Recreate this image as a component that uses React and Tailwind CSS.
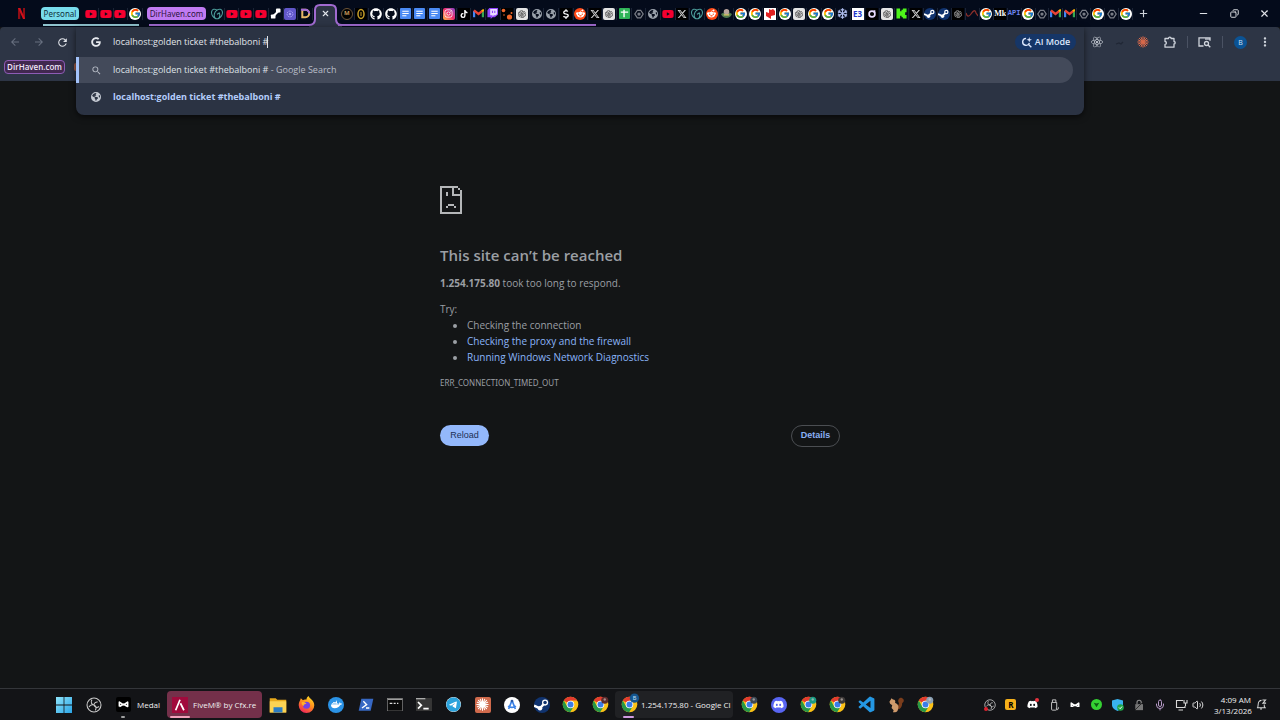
import React, { useState } from 'react';
import clsx from 'clsx';
import { FcGoogle } from 'react-icons/fc';
import {
  FaGithub, FaInstagram, FaTiktok, FaRedditAlien,
  FaXTwitter, FaDiscord, FaDocker, FaTelegram, FaReact, FaYoutube, FaGoogle,
  FaDollarSign, FaEarthAmericas, FaRegSnowflake,
} from 'react-icons/fa6';
import { AiOutlineOpenAI } from 'react-icons/ai';
import { BiLogoVisualStudio } from 'react-icons/bi';
import { MdSearch, MdRefresh, MdMoreVert, MdArrowBack, MdArrowForward } from 'react-icons/md';
import { SiGodaddy } from 'react-icons/si';
import { Plus, Minus, X, Copy, Mic, Volume2 } from 'lucide-react';

const QUERY = 'localhost:golden ticket #thebalboni #';

const Tile = ({ className, children }) => (
  <span className={clsx('flex size-3 shrink-0 items-center justify-center overflow-hidden', className)}>{children}</span>
);

const GmailIcon = () => (
  <svg viewBox="0 0 12 10" className="w-[11px]">
    <path d="M1.2 9V2" stroke="#4285f4" strokeWidth="2.400" />
    <path d="M10.8 9V2" stroke="#34a853" strokeWidth="2.400" />
    <path d="M1 1.500l5 4 5-4" fill="none" stroke="#ea4335" strokeWidth="2.600" />
    <path d="M9.800 2.500l2-1.800" stroke="#fbbc04" strokeWidth="2" />
  </svg>
);

const HexIcon = () => (
  <svg viewBox="0 0 12 12" className="size-[10px]" fill="none" stroke="#7b7f88" strokeWidth="1.500">
    <path d="M4 1.500h4L11 6l-3 4.500H4L1 6z" />
    <circle cx="6" cy="6" r="1.200" fill="#7b7f88" />
  </svg>
);

const StarBurst = ({ className, color }) => (
  <svg viewBox="0 0 24 24" className={className} stroke={color} strokeWidth="2" strokeLinecap="round">
    <path d="M12 12V1.500M12 12V22.500M12 12H1.500M12 12H22.500M12 12L4.500 4.500M12 12l7.500-7.500M12 12l-7.500 7.500M12 12l7.500 7.500M12 12L8 2.500M12 12l4-9.500M12 12l-4 9.500M12 12l4 9.500M12 12L2.500 8M12 12l9.500-4M12 12l-9.500 4M12 12l9.500 4" />
  </svg>
);

const MedalIcon = ({ className }) => (
  <svg viewBox="0 0 24 14" className={className} fill="none" stroke="#fff" strokeWidth="3.600" strokeLinejoin="round">
    <path d="M3 12V2.500l9 6 9-6V12l-9-5-9 5" />
  </svg>
);

const ObsIcon = ({ className }) => (
  <svg viewBox="0 0 24 24" className={className} fill="none" stroke="#c9c9c9" strokeWidth="1.600">
    <circle cx="12" cy="12" r="10.500" />
    <path d="M9 4c-3 4 0 8 3 8 0-3 3-5 5.500-4.500M12 12c3 1 4 5 2 8M19.500 14c-3 3-7 1-7.500-2M12 12c-3-1-6 0-7.500 3" />
  </svg>
);

// favicons, keyed by site
const icons = {
  yt: <Tile><FaYoutube className="size-3 text-[#f5002f]" /></Tile>,
  google: <Tile className="rounded-full bg-white"><FcGoogle className="size-[11px]" /></Tile>,
  godaddy: <SiGodaddy className="size-3 text-[#4fa3a0]" />,
  link: (
    <svg viewBox="0 0 12 12" className="size-[11px]" fill="#fff">
      <rect x="6.500" y="0.500" width="5" height="4.500" rx="1" />
      <rect x="1" y="7" width="5" height="4.500" rx="1" />
      <path d="M3 8l5-5 1.500 1.500-5 5z" />
    </svg>
  ),
  violet: (
    <Tile className="rounded-xs bg-[#6157c9]">
      <svg viewBox="0 0 12 12" className="size-[10px]" fill="none" stroke="#b8b2ff"><circle cx="6" cy="6" r="3.500" strokeDasharray="2 1" /><circle cx="6" cy="6" r="1" fill="#b8b2ff" /></svg>
    </Tile>
  ),
  d: (
    <svg viewBox="0 0 12 12" className="size-[11px]" fill="none" strokeWidth="2.200">
      <path d="M2.500 2v8H6a4 4 0 0 0 0-8z" stroke="#e8b866" />
      <path d="M1 2h5a4 4 0 0 1 4 4" stroke="#a26bd8" />
    </svg>
  ),
  medalM: <Tile className="rounded-full border border-[#6d5538] bg-black text-[6px] font-bold text-[#c99a5e]">M</Tile>,
  coin: (
    <Tile className="bg-black">
      <svg viewBox="0 0 12 12" className="size-3" fill="none" stroke="#c7a02a"><ellipse cx="6" cy="6" rx="3" ry="4.500" strokeWidth="1.500" /><path d="M6 4v4" /></svg>
    </Tile>
  ),
  github: <FaGithub className="size-3 text-white" />,
  doc: (
    <svg viewBox="0 0 12 12" className="size-[11px]">
      <rect width="12" height="12" rx="1" fill="#4a8af4" />
      <path d="M2.500 3.500h7M2.500 6h7M2.500 8.500h4.500" stroke="#fff" strokeWidth="1.200" />
    </svg>
  ),
  ig: <Tile className="rounded-xs bg-linear-to-tr from-[#ffb338] via-[#f0286a] to-[#8a3ac8] text-white"><FaInstagram className="size-[9px]" /></Tile>,
  tiktok: <Tile className="bg-black text-white"><FaTiktok className="size-2" /></Tile>,
  gmail: <GmailIcon />,
  twitch: (
    <svg viewBox="0 0 12 12" className="size-[11px]">
      <path d="M2.500 0H12v7L8.500 10H6l-2 2v-2H0.500V2.500z" fill="#9146ff" />
      <path d="M3.500 1H11v5.500L9.500 8h-2L6 9.500V8H3.500z" fill="#e9dcff" />
      <path d="M6 3v2.500M8.500 3v2.500" stroke="#9146ff" strokeWidth="1.200" />
    </svg>
  ),
  dots: (
    <Tile className="bg-black">
      <svg viewBox="0 0 12 12" className="size-3" fill="#f0662a"><circle cx="2.500" cy="2.500" r="1.800" /><circle cx="8.500" cy="9" r="2.600" /><circle cx="10.500" cy="5" r="1" /><circle cx="3" cy="7" r="0.800" /></svg>
    </Tile>
  ),
  gpt: <Tile className="rounded-xs bg-[#e4e4e4] text-[#3a3a3a]"><AiOutlineOpenAI className="size-[10px]" /></Tile>,
  globe: <FaEarthAmericas className="size-[10px] text-[#98a0aa]" />,
  dollar: <Tile className="bg-black text-white"><FaDollarSign className="size-[10px]" /></Tile>,
  reddit: <Tile className="rounded-full bg-[#ff4a17] text-white"><FaRedditAlien className="size-[9px]" /></Tile>,
  x: <Tile className="bg-black text-[#d8d8d8]"><FaXTwitter className="size-[10px]" /></Tile>,
  sheet: (
    <svg viewBox="0 0 12 12" className="size-[11px]">
      <rect width="12" height="12" rx="1" fill="#2fb457" />
      <path d="M2 4.500h8M5.500 2v8" stroke="#fff" strokeWidth="1.500" />
    </svg>
  ),
  hex: <HexIcon />,
  lily: (
    <svg viewBox="0 0 12 12" className="size-[11px]">
      <path d="M0 6.500c2 6 10 6 12 0L9 5H3z" fill="#4f7a4d" /><circle cx="6" cy="4" r="3" fill="#b9a59c" /><path d="M3 7.500h6" stroke="#d8c46a" strokeWidth="1.500" />
    </svg>
  ),
  red: (
    <Tile className="bg-white">
      <svg viewBox="0 0 12 12" className="size-3" fill="#e02020"><path d="M2 4l3 1V1l2 1 2-1 2 2v4L7 8v3L2 8z" /></svg>
    </Tile>
  ),
  snow: <FaRegSnowflake className="size-[11px] text-[#a9b8e8]" />,
  e3: <Tile className="bg-white text-[8px] font-bold text-[#2336c9]">E3</Tile>,
  ring: (
    <Tile className="bg-black">
      <svg viewBox="0 0 12 12" className="size-[10px]" fill="none" stroke="#e8dcff" strokeWidth="2"><circle cx="6" cy="6" r="3.500" /><path d="M9 1.500v3" /></svg>
    </Tile>
  ),
  kick: (
    <svg viewBox="0 0 12 12" className="size-[11px]" fill="#4df51a">
      <path d="M0.500 0.500h4v3h1.500V2h1.500V0.500h4v4H10v1.500H9v0h1v1.500h1.500v4h-4V10H6V8.500H4.500v3h-4z" />
    </svg>
  ),
  steam: (
    <svg viewBox="0 0 12 12" className="size-3">
      <circle cx="6" cy="6" r="6" fill="#10336f" />
      <path d="M0 6l4.500 2L8 4.500" fill="none" stroke="#fff" strokeWidth="1.800" />
      <circle cx="8.300" cy="4" r="2.200" fill="#fff" /><circle cx="4.500" cy="8.300" r="1.700" fill="#fff" /><circle cx="8.300" cy="4" r="1" fill="#10336f" />
    </svg>
  ),
  atom: <Tile className="bg-black text-[#b5b5b5]"><AiOutlineOpenAI className="size-[10px]" /></Tile>,
  wave: (
    <svg viewBox="0 0 12 12" className="size-3" fill="none" stroke="#8a2f2a" strokeWidth="1.300"><path d="M0 5c1 4 3 4 5 1s4-5 5-1l2 3" /></svg>
  ),
  mk: <Tile className="bg-black font-['Liberation_Serif',serif] text-[8px] font-bold text-white">Mk</Tile>,
  api: <span className="font-['Liberation_Mono',monospace] text-[7px] font-bold text-[#6f86ef]">API</span>,
};

const personalTabs = ['yt', 'yt', 'yt', 'google'];
const dirHavenTabs = ['godaddy', 'yt', 'yt', 'yt', 'link', 'violet', 'd'];
const moreTabs = [
  'medalM', 'coin', 'github', 'github', 'doc', 'doc', 'doc', 'ig', 'tiktok', 'gmail',
  'twitch', 'dots', 'gpt', 'globe', 'globe', 'dollar', 'reddit', 'x', 'gpt', 'sheet',
  'hex', 'globe', 'yt', 'x', 'godaddy', 'reddit', 'lily', 'google', 'google', 'red',
  'google', 'gpt', 'google', 'google', 'snow', 'e3', 'ring', 'gpt', 'kick', 'x',
];
const lastTabs = [
  'steam', 'steam', 'atom', 'wave', 'google', 'mk', 'api', 'google', 'hex', 'gmail',
  'gmail', 'hex', 'google', 'hex', 'google',
];

const TabList = ({ tabs, className }) => (
  <div className={clsx('flex h-full items-center', className)}>
    {tabs.map((name, i) => (
      <button
        key={i}
        type="button"
        aria-label={name}
        className="flex h-3 min-w-0 flex-1 items-center justify-center border-r border-[#1b2436]"
      >
        {icons[name]}
      </button>
    ))}
  </div>
);

const TabStrip = () => (
  <div className="flex h-[27px] bg-[#040b1b]">
    <button type="button" aria-label="Netflix" className="flex w-[41px] items-center justify-center pl-0.5">
      <svg viewBox="0 0 8 12" className="h-[11px]">
        <path d="M0 0h2.500v12H0zM5.500 0H8v12H5.500z" fill="#8f0d15" />
        <path d="M0 0h2.500L8 12H5.500z" fill="#d0101a" />
      </svg>
    </button>
    <div className="relative flex items-center">
      <button type="button" className="h-[13px] w-[38px] rounded-sm bg-[#78dcec] font-['Noto_Sans',sans-serif] text-[8px] leading-[13px] text-[#12303a]">Personal</button>
      <TabList tabs={personalTabs} className="ml-[5px] w-[59px]" />
      <span className="absolute right-1 bottom-px left-0.5 h-0.5 bg-[#8fc4cf]" />
    </div>
    <div className="relative ml-1 flex items-center">
      <button type="button" className="h-[13px] w-[59px] rounded-sm bg-[#c07bf3] font-['Noto_Sans',sans-serif] text-[8px] leading-[13px] text-[#2c1440]">DirHaven.com</button>
      <TabList tabs={dirHavenTabs} className="ml-1 w-[103px]" />
      <span className="absolute right-0 bottom-px left-0.5 h-0.5 bg-[#a06ad0]" />
    </div>
    <button type="button" aria-label="Close tab" className="relative -mx-1 flex w-[33px] items-center justify-center">
      <svg viewBox="0 0 33 27" className="absolute inset-0 h-[27px] w-[33px]">
        <path d="M0 25c4 0 6-2 6-6v-9c0-4 2-5 5-5h11c3 0 5 1 5 5v9c0 4 2 6 6 6v2H0z" fill="#2c3444" />
        <path d="M0 25c4 0 6-2 6-6v-9c0-4 2-5 5-5h11c3 0 5 1 5 5v9c0 4 2 6 6 6" fill="none" stroke="#a06ad0" strokeWidth="2" />
      </svg>
      <X className="relative size-[9px] text-[#e2e5ea]" strokeWidth={3} />
    </button>
    <div className="relative ml-0.5">
      <TabList tabs={moreTabs} className="w-[584px]" />
      <span className="absolute bottom-px -left-0.5 h-0.5 w-[258px] bg-[#a06ad0]" />
    </div>
    <TabList tabs={lastTabs} className="w-[209px]" />
    <button type="button" aria-label="New tab" className="ml-[5px] text-[#cfd3da]"><Plus className="size-[11px]" strokeWidth={2.500} /></button>
    <div className="ml-auto flex w-[82px] items-center justify-between pr-2.5 text-[#e0e3e8]">
      <button type="button" aria-label="Minimize"><Minus className="size-[11px]" strokeWidth={2.500} /></button>
      <button type="button" aria-label="Restore"><Copy className="size-[9px] -scale-x-100" strokeWidth={2.500} /></button>
      <button type="button" aria-label="Close"><X className="size-[11px]" strokeWidth={2.500} /></button>
    </div>
  </div>
);

const Omnibox = () => {
  const [value, setValue] = useState(QUERY);

  return (
    <div className="relative min-w-0 flex-1">
      <div className="absolute inset-x-0 top-0 z-10 rounded-b-lg bg-[#2b3343] shadow-[0_2px_6px_rgba(0,0,0,0.6)]">
        <div className="flex h-[30px] items-center pr-2">
          <FaGoogle className="ml-[15px] size-[10px] text-[#e6e9ee]" />
          <div className="relative ml-3 flex-1">
            <input
              aria-label="Address and search bar"
              value={value}
              onChange={(e) => setValue(e.target.value)}
              className="block w-full bg-transparent text-[9px] leading-4 text-[#e1e4ea] outline-none"
            />
            <span className="absolute top-0.5 left-[154px] h-3 w-px bg-[#dfe2e8]" />
          </div>
          <button type="button" className="flex h-4 w-[61px] items-center justify-center gap-[3px] rounded-full bg-[#163667] text-[9px] font-semibold text-[#dbe6fb]">
            <svg viewBox="0 0 12 12" className="size-[11px]" fill="none" stroke="#dbe6fb" strokeWidth="1.500">
              <path d="M5.500 1.500a3.800 3.800 0 1 0 3.700 5M8 8l3.300 3.300" />
              <path d="M9 0l.7 2.200L12 3l-2.300.8L9 6l-.7-2.200L6 3l2.300-.8z" fill="#dbe6fb" stroke="none" />
            </svg>
            AI Mode
          </button>
        </div>
        <ul className="pb-[5px] text-[9px]">
          <li className="mr-[11px] flex h-[26px] items-center rounded-r-full border-l-3 border-[#a3c3fb] bg-[#434a5a] text-[#dfe2e8]">
            <MdSearch className="ml-3 size-[11px] text-[#b8bdc7]" />
            <span className="ml-[11px] whitespace-pre">{QUERY}<span className="text-[#b9bec8]"> - Google Search</span></span>
          </li>
          <li className="flex h-[27px] items-center">
            <FaEarthAmericas className="ml-[15px] size-[10px] text-[#c5cad3]" />
            <span className="ml-3 font-bold text-[#b4cdfb]">{QUERY}</span>
          </li>
        </ul>
      </div>
    </div>
  );
};

const Toolbar = () => (
  <div className="flex h-[54px] rounded-t-sm bg-[#2d3545]">
    <div className="w-[76px] overflow-hidden">
      <div className="flex h-[30px] items-center justify-between pr-[7px] pl-[9px]">
        <button type="button" aria-label="Back"><MdArrowBack className="size-3 text-[#687080]" /></button>
        <button type="button" aria-label="Forward"><MdArrowForward className="size-3 text-[#687080]" /></button>
        <button type="button" aria-label="Reload page"><MdRefresh className="size-[13px] text-[#dfe2e8]" /></button>
      </div>
      <div className="flex items-center gap-[9px] pt-[3px] pl-1">
        <button type="button" className="h-[14px] w-[61px] shrink-0 rounded-sm border border-[#8d5cb5] bg-[#41284f] text-[8px] leading-3 font-semibold text-[#f0e6f8]">DirHaven.com</button>
        <span className="h-2 w-1 shrink-0 rounded-l-xs bg-[#9a5a48]" />
      </div>
    </div>
    <Omnibox />
    <div className="flex h-[30px] w-[196px] items-center justify-between pr-2 pl-[7px] text-[#cfd4dc]">
      <button type="button" aria-label="React Developer Tools"><FaReact className="size-3" /></button>
      <button type="button" aria-label="Extension">
        <svg viewBox="0 0 12 12" className="size-3" fill="none" stroke="#202735" strokeWidth="1.300"><path d="M2 8l3-1 2 1 2-2" /></svg>
      </button>
      <button type="button" aria-label="Claude"><StarBurst className="size-3" color="#d9694a" /></button>
      <button type="button" aria-label="Extensions" className="ml-1">
        <svg viewBox="0 0 12 12" className="size-3" fill="none" stroke="#cfd4dc" strokeWidth="1.300">
          <path d="M1 2.500h3.500a1.300 1.300 0 0 1 2.600 0H10v3a1.200 1.200 0 0 1 0 2.400V11.200H1V8.300a1.300 1.300 0 0 0 0-2.800z" strokeLinejoin="round" />
        </svg>
      </button>
      <span className="h-3 w-px bg-[#4a5263]" />
      <button type="button" aria-label="Search tabs">
        <svg viewBox="0 0 13 12" className="h-3 w-[13px]" fill="none" stroke="#cfd4dc" strokeWidth="1.300">
          <path d="M5.500 10H1V1.800h11v3" /><path d="M7 3h5" /><circle cx="8.500" cy="7.500" r="2" /><path d="M10 9l2.300 2.300" />
        </svg>
      </button>
      <span className="h-3 w-px bg-[#4a5263]" />
      <button type="button" aria-label="Profile" className="size-[13px] rounded-full bg-[#0b5394] text-[7px] leading-[13px] text-[#cfe2f7]">B</button>
      <button type="button" aria-label="Menu"><MdMoreVert className="size-[14px]" /></button>
    </div>
  </div>
);

const ErrorPage = () => (
  <main className="mx-auto w-[400px] max-w-full flex-1 pt-[105px] text-[#9b9fa4]">
    <svg viewBox="0 0 22 28" className="h-7 w-[22px]" fill="#b4b6b8" shapeRendering="crispEdges">
      <path d="M0 0h18v2H2v24h18V10h2v18H0zM12 2h2v6h8v2H12zM18 2h2v2h-2zM20 4h2v6h-2z" />
      <path d="M6 6h2v4H6zM8 18h6v2H8zM6 20h2v2H6zM14 20h2v2h-2z" />
    </svg>
    <h1 className="mt-[29px] text-[15px] leading-6 font-semibold">This site can’t be reached</h1>
    <p className="mt-2 text-[10px] leading-4"><strong>1.254.175.80</strong> took too long to respond.</p>
    <p className="mt-2.5 text-[10px] leading-4">Try:</p>
    <ul className="list-disc pl-[27px] text-[10px] leading-4">
      <li>Checking the connection</li>
      <li><a href="#proxy" className="text-[#8ab4f8]">Checking the proxy and the firewall</a></li>
      <li><a href="#diagnostics" className="text-[#8ab4f8]">Running Windows Network Diagnostics</a></li>
    </ul>
    <p className="mt-2.5 font-['Noto_Sans',sans-serif] text-[8px] leading-4">ERR_CONNECTION_TIMED_OUT</p>
    <div className="mt-[34px] flex items-start justify-between font-['Liberation_Sans',Arial,sans-serif] text-[9px]">
      <button type="button" className="h-[21px] w-[49px] rounded-full bg-[#93b8fb] text-[#1c3155]">Reload</button>
      <button type="button" className="h-[22px] w-[49px] rounded-full border border-[#4b4e52] font-bold text-[#8ab0f5]">Details</button>
    </div>
  </main>
);

const ChromeIcon = ({ badge, letter }) => (
  <svg viewBox="0 0 24 24" className="size-[17px] shrink-0 overflow-visible">
    <circle cx="12" cy="12" r="11" fill="#fbc116" />
    <path d="M12 12L2.500 6.500A11 11 0 0 1 21.500 6.500H12z" fill="#e33b2e" />
    <path d="M2.500 6.500A11 11 0 0 0 11.500 23L16.500 14.700 7.300 14.700z" fill="#279847" />
    <circle cx="12" cy="12" r="5.300" fill="#fff" />
    <circle cx="12" cy="12" r="4.200" fill="#3b7de8" />
    {badge && !letter && <circle cx="18" cy="6" r="5" fill={badge} />}
    {badge && !letter && <circle cx="18" cy="5" r="1.700" fill="#d8cdc8" opacity="0.6" />}
    {letter && <circle cx="19" cy="3" r="6.500" fill={badge} />}
    {letter && <text x="19" y="6" fontSize="8" textAnchor="middle" fill="#cfe2f7">{letter}</text>}
  </svg>
);

const pinned = [
  ['File Explorer', (
    <svg viewBox="0 0 24 24" className="size-[18px]">
      <path d="M1 3h8l2 2h12v17H1z" fill="#e8a91c" /><path d="M1 7h22v15H1z" fill="#fcd354" /><path d="M6 15h12v7H6z" fill="#2b7cc4" />
    </svg>
  )],
  ['Firefox', (
    <svg viewBox="0 0 24 24" className="size-[17px]">
      <defs>
        <linearGradient id="fox" x1="0.8" y1="0" x2="0.3" y2="1"><stop stopColor="#ffe226" /><stop offset="0.5" stopColor="#ff8a1e" /><stop offset="1" stopColor="#f0245c" /></linearGradient>
      </defs>
      <path d="M3 6l1-3 3 3c2-1 4-1 5-1 0-2 1-4 3-5 1 4 8 6 8 13a11 11 0 0 1-22 0c0-3 1-5 2-7z" fill="url(#fox)" />
      <circle cx="12" cy="13" r="5" fill="#7542e5" />
      <path d="M5 9c3-1 5 0 7 2-2 0-4 1-4 3-2-1-3-3-3-5z" fill="#ffb02e" />
    </svg>
  )],
  ['Docker', <span className="flex size-4 items-center justify-center rounded-full bg-[#2b93e6]"><FaDocker className="size-[11px] text-white" /></span>],
  ['PowerShell', (
    <svg viewBox="0 0 24 20" className="w-4">
      <path d="M5 1h18l-4 18H1z" fill="#3768c4" /><path d="M8 5l5 5-7 5M12 15h5" fill="none" stroke="#fff" strokeWidth="2" />
    </svg>
  )],
  ['Command Prompt', (
    <svg viewBox="0 0 24 20" className="w-4">
      <rect x="0.500" y="0.500" width="23" height="19" fill="#0a0a0a" stroke="#8c8c8c" /><path d="M1 2h22" stroke="#9d9d9d" strokeWidth="2" /><path d="M4 8h4M10 8h3M15 8h2" stroke="#ddd" strokeWidth="2" />
    </svg>
  )],
  ['Terminal', (
    <svg viewBox="0 0 24 20" className="w-4">
      <rect width="24" height="20" rx="1" fill="#363636" /><path d="M0 1h14" stroke="#aaa" strokeWidth="2" /><path d="M3 6l5 5-5 5M11 16h8" fill="none" stroke="#fff" strokeWidth="2.500" />
    </svg>
  )],
  ['Telegram', <FaTelegram className="size-[15px] rounded-full bg-white text-[#2ba3dc]" />],
  ['Claude', <span className="flex size-4 items-center justify-center rounded-xs bg-[#d06a4c]"><StarBurst className="size-[13px]" color="#fff" /></span>],
  ['Android Studio', (
    <svg viewBox="0 0 24 24" className="size-4">
      <circle cx="12" cy="12" r="12" fill="#fff" /><path d="M12 5L7 18M12 5l5 13M6 14c4 2 8 2 12 0" fill="none" stroke="#3b82e6" strokeWidth="2.500" /><circle cx="12" cy="6" r="2" fill="#2a5aa8" />
    </svg>
  )],
  ['Steam', (
    <svg viewBox="0 0 12 12" className="size-4">
      <circle cx="6" cy="6" r="6" fill="#10336f" />
      <path d="M0 6.500l4.500 2L8 4.500" fill="none" stroke="#fff" strokeWidth="1.800" />
      <circle cx="8.300" cy="4.200" r="2.300" fill="#fff" /><circle cx="4.500" cy="8.500" r="1.700" fill="#fff" /><circle cx="8.300" cy="4.200" r="1.300" fill="#10336f" />
    </svg>
  )],
  ['Chrome', <ChromeIcon />],
  ['Chrome profile 2', <ChromeIcon badge="#5d2b2b" />],
];

const running = [
  ['Chrome profile 3', <ChromeIcon badge="#3c4854" />],
  ['Discord', <span className="flex size-4 items-center justify-center rounded-full bg-[#5865f2]"><FaDiscord className="size-[11px] text-white" /></span>],
  ['Chrome profile 4', <ChromeIcon badge="#199a82" />],
  ['Chrome profile 5', <ChromeIcon badge="#3d3938" />],
  ['Visual Studio Code', <BiLogoVisualStudio className="size-[19px] text-[#2497e3]" />],
  ['Squirrel', (
    <svg viewBox="0 0 24 24" className="size-[17px]">
      <path d="M13 19c-1-6 4-7 2-10-2-4 2-8 5-6 4 2 2 6 0 7 0 5-2 9-7 9z" fill="#7a3d1c" />
      <path d="M2 8l2-3 1-2 2 2c3 0 4 2 3 5 4 1 6 5 4 9 0 2-2 4-4 4H7l1-3-3-3 1-4-3-2z" fill="#cf9a6c" />
    </svg>
  )],
  ['Chrome profile 6', <ChromeIcon badge="#8aa0b4" />],
];

const tray = [
  ['OBS', (
    <span className="relative"><ObsIcon className="size-3" /><span className="absolute bottom-0 left-0 size-1 rounded-full bg-[#e0202c]" /></span>
  )],
  ['Rockstar', <span className="flex size-[11px] items-center justify-center rounded-xs bg-[#f5b01a] text-[8px] font-bold text-black">R</span>],
  ['Discord', <span className="relative"><FaDiscord className="size-[11px] text-white" /><span className="absolute -top-px -right-px size-1 rounded-full bg-[#e8323e]" /></span>],
  ['USB', (
    <svg viewBox="0 0 12 14" className="h-3" fill="none" stroke="#c9c9c9" strokeWidth="1.100"><path d="M4 4V1h4v3M3 4h6v8a1 1 0 0 1-1 1H4a1 1 0 0 1-1-1zM8 11l2 1.500L12 9" /></svg>
  )],
  ['Medal', <MedalIcon className="w-[10px]" />],
  ['Razer', (
    <svg viewBox="0 0 12 12" className="size-[11px]"><circle cx="6" cy="6" r="6" fill="#35d233" /><path d="M3 4l3 1 3-1-1.500 2.500L6 9 4.500 6.500z" fill="#0d5a14" /></svg>
  )],
  ['Windows Security', (
    <svg viewBox="0 0 12 12" className="size-3"><path d="M0 1.500L5.500 0 11 1.500V6c0 3-3 5-5.500 6C3 11 0 9 0 6z" fill="#39b2ee" /><circle cx="8.500" cy="8.500" r="3.300" fill="#1fa64a" /><path d="M7 8.500l1.200 1.200L10 7.500" fill="none" stroke="#fff" /></svg>
  )],
  ['VPN off', (
    <svg viewBox="0 0 12 14" className="h-3"><path d="M3.500 6V4a2.500 2.500 0 0 1 5 0v2" fill="none" stroke="#8b8b8b" strokeWidth="1.300" /><rect x="1.500" y="6" width="9" height="7" fill="#777" /><path d="M1 13L11 3" stroke="#222" /></svg>
  )],
  ['Microphone', <Mic className="size-3 text-[#b79bc8]" />],
];

const Taskbar = () => (
  <footer className="flex h-8 items-center border-t border-[#34363a] bg-[#131417] text-[8px] text-[#f0f0f0]">
    <div className="ml-[49px] flex w-[60px] shrink-0 items-center justify-between">
      <button type="button" aria-label="Start" className="flex w-[30px] justify-center">
        <svg viewBox="0 0 16 16" className="size-4">
          <defs>
            <linearGradient id="win" x2="1" y2="1"><stop stopColor="#8ee4fb" /><stop offset="1" stopColor="#2aa5e6" /></linearGradient>
          </defs>
          <path d="M0 0h7.600v7.600H0zM8.400 0H16v7.600H8.400zM0 8.400h7.600V16H0zM8.400 8.400H16V16H8.400z" fill="url(#win)" />
        </svg>
      </button>
      <button type="button" aria-label="OBS Studio" className="flex w-[30px] justify-center"><ObsIcon className="size-4" /></button>
    </div>
    <button type="button" className="relative flex h-7 w-[58px] items-center gap-[6px] pl-[7px]">
      <span className="flex size-[15px] items-center justify-center rounded-xs bg-black"><MedalIcon className="w-[11px]" /></span>
      Medal
      <span className="absolute bottom-px left-3 h-0.5 w-1 rounded-full bg-[#a0a0a0]" />
    </button>
    <button type="button" className="relative flex h-[27px] w-[95px] shrink-0 items-center gap-[5px] rounded-sm bg-[#74304a] pl-[5px] whitespace-nowrap">
      <span className="flex size-4 items-center justify-center bg-[#a10a3c]">
        <svg viewBox="0 0 16 16" className="size-[14px]" fill="none" stroke="#fff" strokeWidth="2"><path d="M8 2L3 14M8.500 6l4 8" /></svg>
      </span>
      FiveM® by Cfx.re
      <span className="absolute bottom-0 left-[3px] h-0.5 w-5 rounded-full bg-[#f3a0bb]" />
    </button>
    <nav className="ml-px flex w-[352px] items-center">
      {pinned.map(([label, icon]) => (
        <button key={label} type="button" aria-label={label} className="flex flex-1 justify-center">{icon}</button>
      ))}
    </nav>
    <button type="button" className="relative flex h-[27px] w-[118px] shrink-0 items-center gap-[3px] rounded-sm bg-[#202124] pl-1.5 whitespace-nowrap">
      <ChromeIcon badge="#14568f" letter="B" />
      1.254.175.80 - Google Cl
      <span className="absolute bottom-0 left-2 h-0.5 w-[11px] rounded-full bg-[#cf9be0]" />
    </button>
    <nav className="ml-0.5 flex w-[205px] items-center">
      {running.map(([label, icon]) => (
        <button key={label} type="button" aria-label={label} className="flex flex-1 justify-center">{icon}</button>
      ))}
    </nav>
    <div className="ml-auto flex w-[192px] items-center">
      {tray.map(([label, icon]) => (
        <button key={label} type="button" aria-label={label} className="flex flex-1 justify-center">{icon}</button>
      ))}
    </div>
    <button type="button" aria-label="Network and volume" className="ml-1 flex items-center gap-1 text-[#d8d8d8]">
      <svg viewBox="0 0 13 12" className="h-3 w-[13px]" fill="none" stroke="#d8d8d8" strokeWidth="1.100"><path d="M8 1.500H1.500v7H10V7M3.500 11h4.500M9 1v3h3V1M10.500 4v3" /></svg>
      <Volume2 className="size-3" />
    </button>
    <time className="ml-2.5 w-[37px] shrink-0 text-right leading-[11px] whitespace-nowrap">
      <span className="block">4:09 AM</span>
      <span className="block">3/13/2026</span>
    </time>
    <button type="button" aria-label="Notifications" className="mr-[13px] ml-[5px]">
      <svg viewBox="0 0 12 12" className="size-[11px]" fill="none" stroke="#d8d8d8" strokeWidth="1.100"><path d="M1 9.500h9L9 8V6M2 9l.5-4A3.500 3.500 0 0 1 6 1.500M4.500 11h2M7 1h3.500L7.500 4.500H11" /></svg>
    </button>
  </footer>
);

const App = () => {
  return (
    <div className="flex min-h-screen flex-col overflow-hidden bg-[#131516] font-['Open_Sans','Segoe_UI',sans-serif]">
      <header>
        <TabStrip />
        <Toolbar />
      </header>
      <ErrorPage />
      <Taskbar />
    </div>
  );
};

export default App;
